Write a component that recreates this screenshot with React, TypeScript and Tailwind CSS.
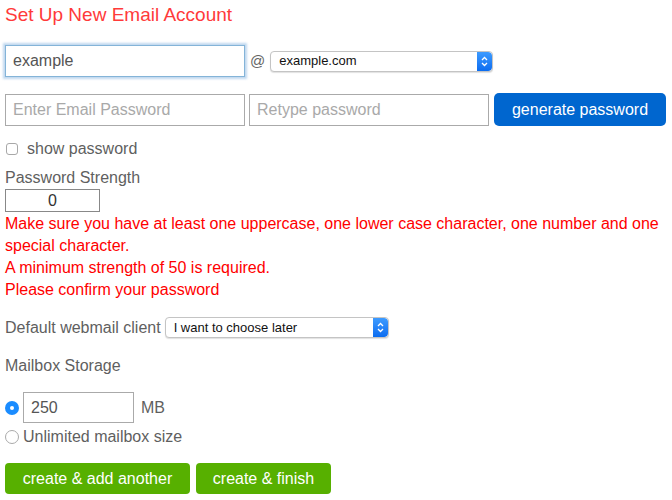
import { useState } from 'react';

function Stepper() {
  return (
    <span className="flex h-full w-[15px] shrink-0 items-center justify-center rounded-r-[4px] bg-gradient-to-b from-[#3d9bff] to-[#0a6cf0]">
      <svg width="7" height="11" viewBox="0 0 7 11" fill="none" stroke="white" strokeWidth="1.3">
        <path d="M1 4 L3.5 1.5 L6 4" />
        <path d="M1 7 L3.5 9.5 L6 7" />
      </svg>
    </span>
  );
}

function FakeSelect({ value, width }: { value: string; width: string }) {
  return (
    <div
      className={`flex h-[21px] items-center overflow-hidden rounded-[4px] border border-[#c4c4c4] bg-white shadow-[0_1px_1px_rgba(0,0,0,0.12)] ${width}`}
    >
      <span className="flex-1 truncate pl-[8px] text-[13px] text-[#111]">{value}</span>
      <Stepper />
    </div>
  );
}

export default function App() {
  const [user, setUser] = useState('example');
  const [size, setSize] = useState('250');

  return (
    <div className="h-[500px] w-[672px] bg-white px-[5px] font-['Liberation_Sans',Arial,sans-serif] text-[#5f5f5f]">
      <h1 className="pt-[3px] text-[19px] leading-[24px] text-[#ff3a3a]">Set Up New Email Account</h1>

      {/* user @ domain */}
      <div className="mt-[18px] flex items-center">
        <input
          value={user}
          onChange={(e) => setUser(e.target.value)}
          className="h-[32px] w-[240px] border border-[#84b4d8] px-[7px] text-[16px] text-[#555] shadow-[0_0_2px_2px_rgba(120,170,220,0.45)] outline-none"
        />
        <span className="ml-[5px] mr-[5px] text-[15px] text-[#666]">@</span>
        <FakeSelect value="example.com" width="w-[223px]" />
      </div>

      {/* passwords */}
      <div className="mt-[16px] flex items-center">
        <input
          placeholder="Enter Email Password"
          className="h-[32px] w-[240px] border border-[#aaa] px-[7px] text-[16px] outline-none placeholder:text-[#a9a9a9]"
        />
        <input
          placeholder="Retype password"
          className="ml-[4px] h-[32px] w-[240px] border border-[#aaa] px-[7px] text-[16px] outline-none placeholder:text-[#a9a9a9]"
        />
        <button className="ml-[5px] h-[33px] w-[172px] rounded-[5px] bg-[#0066cf] text-[16px] text-white">
          generate password
        </button>
      </div>

      <label className="mt-[13px] flex items-center">
        <span className="ml-[1px] h-[12px] w-[12px] rounded-[3px] border border-[#a8a8a8] bg-white" />
        <span className="ml-[9px] text-[16px] leading-[20px]">show password</span>
      </label>

      <div className="mt-[9px] text-[16px] leading-[20px]">Password Strength</div>
      <div className="mt-[1px] flex h-[23px] w-[95px] items-center justify-center border border-[#888] text-[16px] text-[#333]">
        0
      </div>

      <div className="mt-[1px] text-[16px] leading-[22px] text-[#ff0000]">
        <p>Make sure you have at least one uppercase, one lower case character, one number and one special character.</p>
        <p>A minimum strength of 50 is required.</p>
        <p>Please confirm your password</p>
      </div>

      <div className="mt-[16px] flex items-center">
        <span className="text-[16px] leading-[20px]">Default webmail client</span>
        <div className="ml-[4px]">
          <FakeSelect value="I want to choose later" width="w-[224px]" />
        </div>
      </div>

      <div className="mt-[18px] text-[16px] leading-[20px]">Mailbox Storage</div>

      <div className="mt-[16px] flex items-center">
        <span className="flex h-[14px] w-[14px] items-center justify-center rounded-full bg-[#1a8cff]">
          <span className="h-[4px] w-[4px] rounded-full bg-white" />
        </span>
        <input
          value={size}
          onChange={(e) => setSize(e.target.value)}
          className="ml-[4px] h-[31px] w-[111px] border border-[#aaa] px-[7px] text-[16px] text-[#555] outline-none"
        />
        <span className="ml-[7px] text-[16px]">MB</span>
      </div>
      <label className="mt-[4px] flex items-center">
        <span className="h-[14px] w-[14px] rounded-full border border-[#aaa] bg-white" />
        <span className="ml-[4px] text-[16px] leading-[20px]">Unlimited mailbox size</span>
      </label>

      <div className="mt-[16px] flex items-center gap-[6px]">
        <button className="h-[31px] w-[185px] rounded-[4px] bg-[#57b000] text-[16px] text-white">
          create &amp; add another
        </button>
        <button className="h-[31px] w-[135px] rounded-[4px] bg-[#57b000] text-[16px] text-white">
          create &amp; finish
        </button>
      </div>
    </div>
  );
}
